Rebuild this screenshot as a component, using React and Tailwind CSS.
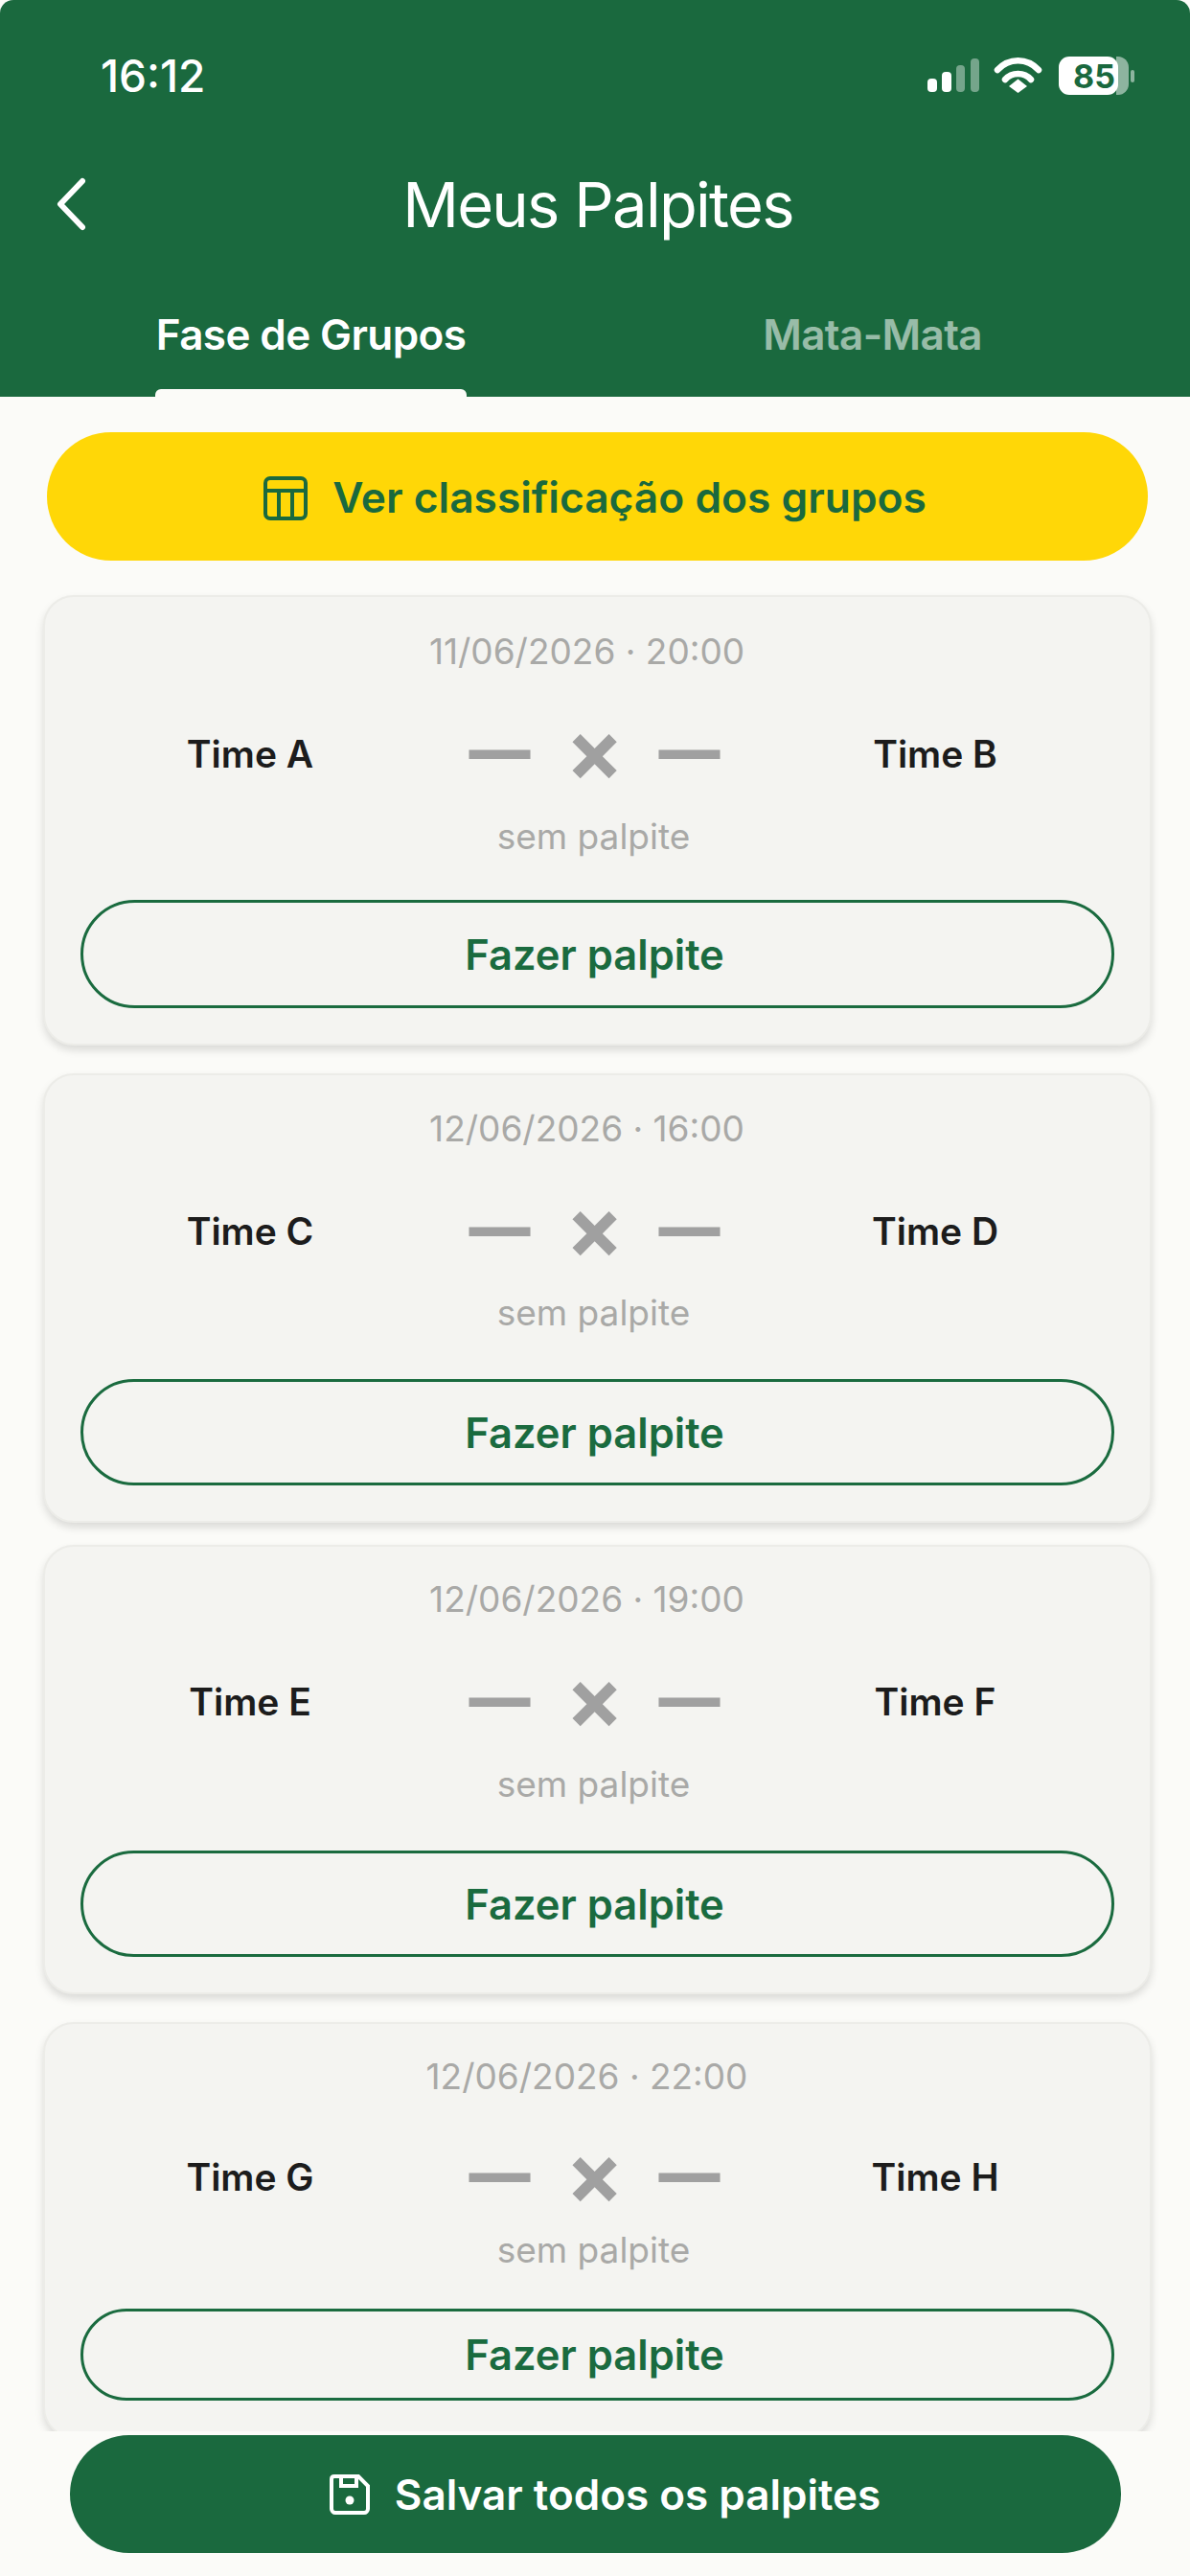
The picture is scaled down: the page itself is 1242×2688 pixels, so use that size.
import React from "react";

const matches = [
  { date: "11/06/2026 · 20:00", home: "Time A", away: "Time B", mt: "mt-[36px]", pt: "pt-[35px]", nameMt: "mt-[49px]", semMt: "mt-[29px]", btnMt: "mt-[45px]", btn: "h-[113px]" },
  { date: "12/06/2026 · 16:00", home: "Time C", away: "Time D", mt: "mt-[29px]", pt: "pt-[34px]", nameMt: "mt-[49px]", semMt: "mt-[28px]", btnMt: "mt-[48px]", btn: "h-[111px]" },
  { date: "12/06/2026 · 19:00", home: "Time E", away: "Time F", mt: "mt-[23px]", pt: "pt-[33px]", nameMt: "mt-[49px]", semMt: "mt-[29px]", btnMt: "mt-[48px]", btn: "h-[111px]" },
  { date: "12/06/2026 · 22:00", home: "Time G", away: "Time H", mt: "mt-[29px]", pt: "pt-[33px]", nameMt: "mt-[47px]", semMt: "mt-[19px]", btnMt: "mt-[40px]", btn: "h-[96px]" },
];

const MatchCard = ({ date, home, away, mt, pt, nameMt, semMt, btnMt, btn }) => {
  return (
    <div className={`${mt} ${pt} rounded-[32px] border-2 border-[#ecece8] bg-[#f4f4f1] px-[37px] pb-[37px] shadow-[0_5px_8px_rgba(0,0,0,0.13)]`}>
      <p className="pr-[22px] text-center text-[37px] leading-[44px] text-[#a9a9a7]">{date}</p>
      <div className={`${nameMt} grid h-[72px] grid-cols-[390px_1fr_390px] items-center`}>
        <span className="pr-[36px] text-center text-[39px] font-semibold text-[#1c1c1c]">{home}</span>
        <div className="flex h-[72px] items-center justify-center pr-[6px] pb-[8px] text-[64px] leading-none font-black text-[#a0a0a0]">
          <span>—</span>
          <span className="w-[134px] text-center text-[90px] leading-[72px] font-bold">×</span>
          <span>—</span>
        </div>
        <span className="pl-[16px] text-center text-[39px] font-semibold text-[#1c1c1c]">{away}</span>
      </div>
      <p className={`${semMt} pr-[8px] text-center text-[37px] leading-[42px] text-[#a9a9a7]`}>sem palpite</p>
      <button className={`${btn} ${btnMt} flex w-full items-center justify-center rounded-full border-[3px] border-[#1a6b3f] pt-[2px] pr-[6px] text-[43.5px] font-semibold text-[#1a6b3f]`}>
        Fazer palpite
      </button>
    </div>
  );
};

const StatusIcons = () => (
  <svg className="overflow-visible" width="218" height="44" viewBox="0 0 218 44" fill="none">
    <rect x="0" y="21" width="10" height="14" rx="4" fill="#fff" />
    <rect x="15" y="14" width="10" height="21" rx="4" fill="#fff" />
    <rect x="30" y="7" width="9" height="28" rx="4" fill="#fff" fillOpacity="0.4" />
    <rect x="45" y="0" width="9" height="35" rx="4" fill="#fff" fillOpacity="0.4" />
    <path d="M73 12C85 -1 104 -1 116 12" stroke="#fff" strokeWidth="6.5" strokeLinecap="round" />
    <path d="M81 22C88 14 101 14 108 22" stroke="#fff" strokeWidth="6.5" strokeLinecap="round" />
    <path d="M85 29L94.500 21.500L104 29L94.500 36Z" fill="#fff" />
    <rect x="137" y="-2" width="62" height="40" rx="11" fill="#fff" />
    <path d="M197 -2H199C205 -2 210 3 210 9V27C210 33 205 38 199 38H197Z" fill="#fff" fillOpacity="0.5" />
    <rect x="212" y="12" width="4" height="13" rx="2" fill="#fff" fillOpacity="0.5" />
  </svg>
);

const App = () => {
  return (
    <div className="flex h-[2688px] w-[1242px] flex-col overflow-hidden bg-[#fbfbf8] font-['Inter',sans-serif]">
      <header className="h-[414px] shrink-0 rounded-t-[14px] bg-[#1a693e] text-white">
        <div className="relative flex h-[160px] items-start justify-between pt-[52px] pr-[56px] pl-[105px]">
          <span className="text-[46px] leading-[54px] font-medium">16:12</span>
          <div className="relative mt-[9px]">
            <StatusIcons />
            <span className="absolute top-[-2px] left-[152px] text-[34px] leading-[41px] font-bold text-[#1a693e]">85</span>
          </div>
        </div>
        <div className="relative flex h-[108px] items-center justify-center pl-[6px]">
          <svg className="absolute top-[24px] left-[56px]" width="36" height="58" viewBox="0 0 36 58" fill="none">
            <path d="M30 5L7 29L30 53" stroke="#fff" strokeWidth="6" strokeLinecap="round" strokeLinejoin="round" />
          </svg>
          <h1 className="text-[65px] leading-[80px] font-normal tracking-[-1.7px]">Meus Palpites</h1>
        </div>
        <div className="flex h-[146px] items-start justify-between pt-[28px] pr-[217px] pl-[162px]">
          <div className="flex h-[118px] w-[325px] flex-col items-center justify-between">
            <span className="mt-[26px] text-[44px] leading-[54px] font-semibold tracking-[-0.6px] whitespace-nowrap">Fase de Grupos</span>
            <div className="h-[8px] w-full rounded-t-[6px] bg-[#fbfbf8]" />
          </div>
          <span className="mt-[26px] text-[44px] leading-[54px] font-semibold tracking-[-0.6px] text-white/55">Mata-Mata</span>
        </div>
      </header>

      <main className="min-h-0 flex-1 overflow-hidden pt-[37px] pr-[40px] pl-[45px]">
        <button className="mx-[4px] flex h-[134px] w-[1149px] items-center justify-center gap-[26px] rounded-full bg-[#ffd707] pt-[3px] pr-[5px] text-[44.3px] font-semibold text-[#1a693e]">
          <svg width="46" height="46" viewBox="0 0 46 46" fill="none" stroke="#1a693e" strokeWidth="4">
            <rect x="2" y="2" width="42" height="42" rx="5" />
            <path d="M2 15H44M16 15V44M30 15V44" />
          </svg>
          Ver classificação dos grupos
        </button>
        {matches.map((m) => (
          <MatchCard key={m.home} {...m} />
        ))}
      </main>

      <footer className="h-[151px] shrink-0 px-[73px] pt-[4px]">
        <button className="flex h-[123px] w-[1097px] items-center justify-center gap-[26px] rounded-full bg-[#1a693e] pl-[20px] text-[44px] font-semibold text-white">
          <svg width="42" height="42" viewBox="0 0 42 42" fill="none" stroke="#fff" strokeWidth="4">
            <path d="M5 2H30L40 12V36C40 38 38 40 36 40H6C4 40 2 38 2 36V5C2 3 3 2 5 2Z" />
            <path d="M12 2V12H28V2" />
            <circle cx="21" cy="27" r="4.500" fill="#fff" stroke="none" />
          </svg>
          Salvar todos os palpites
        </button>
      </footer>
    </div>
  );
};

export default App;
